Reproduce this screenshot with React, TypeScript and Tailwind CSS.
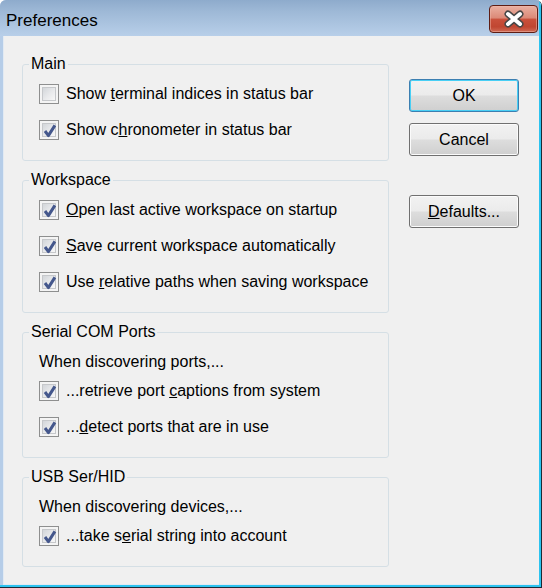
type Item = { pre: string; u: string; post: string; checked: boolean };

const groups: { title: string; note?: string; items: Item[] }[] = [
  {
    title: "Main",
    items: [
      { pre: "Show ", u: "t", post: "erminal indices in status bar", checked: false },
      { pre: "Show c", u: "h", post: "ronometer in status bar", checked: true },
    ],
  },
  {
    title: "Workspace",
    items: [
      { pre: "", u: "O", post: "pen last active workspace on startup", checked: true },
      { pre: "", u: "S", post: "ave current workspace automatically", checked: true },
      { pre: "Use ", u: "r", post: "elative paths when saving workspace", checked: true },
    ],
  },
  {
    title: "Serial COM Ports",
    note: "When discovering ports,...",
    items: [
      { pre: "...retrieve port ", u: "c", post: "aptions from system", checked: true },
      { pre: "...", u: "d", post: "etect ports that are in use", checked: true },
    ],
  },
  {
    title: "USB Ser/HID",
    note: "When discovering devices,...",
    items: [{ pre: "...take s", u: "e", post: "rial string into account", checked: true }],
  },
];

function CheckBox({ checked }: { checked: boolean }) {
  return (
    <div className="size-[20px] shrink-0 border border-[#8e8f8f] bg-[#f4f4f4] p-[2px]">
      <div className="relative size-full border border-[#c6c8cb] bg-[linear-gradient(135deg,#d3d6da_0%,#e9eaec_55%,#f7f7f7_100%)]">
        {checked && (
          <svg className="absolute -left-[3px] -top-[3px]" width="20" height="20" viewBox="0 0 20 20">
            <path d="M5 10 L8.4 14.6 L14.9 4.4" fill="none" stroke="#44578c" strokeWidth="3" strokeLinejoin="round" />
          </svg>
        )}
      </div>
    </div>
  );
}

function Button({ label, u, isDefault }: { label: string; u?: string; isDefault?: boolean }) {
  return (
    <button
      className={
        "h-[33px] w-[110px] rounded-[3px] border text-[16px] leading-[18px] text-black bg-[linear-gradient(to_bottom,#f2f2f2_0%,#ebebeb_48%,#dddddd_52%,#cfcfcf_100%)] " +
        (isDefault
          ? "border-[#3c7fb1] shadow-[inset_0_0_0_1px_#48cff5]"
          : "border-[#707070] shadow-[inset_0_0_0_1px_#fbfbfb]")
      }
    >
      {u && <u>{u}</u>}
      {label}
    </button>
  );
}

export default function App() {
  return (
    <div className="h-[588px] w-[542px] overflow-hidden rounded-t-[6px] border-r border-b border-[#1c2a36] font-['Liberation_Sans',Arial,sans-serif] text-black">
      <div className="flex h-full flex-col border-r-2 border-b-2 border-[#2cc3ef] bg-[#b6cde8]">
        <div className="flex h-[36px] shrink-0 items-start justify-between bg-[linear-gradient(to_bottom,#8eabcc_0%,#9db8d6_30%,#b8cfe9_100%)] pl-[6px]">
          <span className="pt-[11px] text-[17px] leading-[20px]">Preferences</span>
          <div className="mr-[1px] mt-[5px] flex h-[28px] w-[49px] items-center justify-center rounded-[4px] border border-[#5e1d14] bg-[linear-gradient(to_bottom,#eab0a2_0%,#dc8a78_45%,#c9503b_52%,#c04631_80%,#cf6a55_100%)] shadow-[inset_0_0_0_1px_#f0b9ab80]">
            <svg width="22" height="18" viewBox="0 0 22 18">
              <path d="M5 4 L17 14 M17 4 L5 14" stroke="#474747" strokeWidth="7" strokeLinecap="round" />
              <path d="M5 4 L17 14 M17 4 L5 14" stroke="#ffffff" strokeWidth="4" strokeLinecap="round" />
            </svg>
          </div>
        </div>
        <div className="flex flex-1 pl-[3px]">
          <div className="flex flex-1 gap-[20px] border-l border-b border-[#e2eaf3] bg-[#f0f0f0] pl-[18px] pr-[18px] pt-[19px] text-[16px] leading-[18px]">
            <div className="flex w-[367px] flex-col gap-[10px]">
              {groups.map((g) => (
                <fieldset key={g.title} className="rounded-[3px] border border-[#d5dfe5] pl-[6px] pb-[12px]">
                  <legend className="px-[2px] leading-[18px]">{g.title}</legend>
                  <div className="flex flex-col pl-[10px] pt-[3px]">
                    {g.note && <div className="flex h-[36px] items-center">{g.note}</div>}
                    {g.items.map((it, i) => (
                      <div
                        key={i}
                        className={"flex h-[36px] items-center gap-[7px] " + (g.note && i === 0 ? "-mt-[7px]" : "")}
                      >
                        <CheckBox checked={it.checked} />
                        <span>
                          {it.pre}
                          <u>{it.u}</u>
                          {it.post}
                        </span>
                      </div>
                    ))}
                  </div>
                </fieldset>
              ))}
            </div>
            <div className="flex flex-col pt-[24px]">
              <Button label="OK" isDefault />
              <div className="mt-[11px]">
                <Button label="Cancel" />
              </div>
              <div className="mt-[39px]">
                <Button label="efaults..." u="D" />
              </div>
            </div>
          </div>
        </div>
      </div>
    </div>
  );
}
